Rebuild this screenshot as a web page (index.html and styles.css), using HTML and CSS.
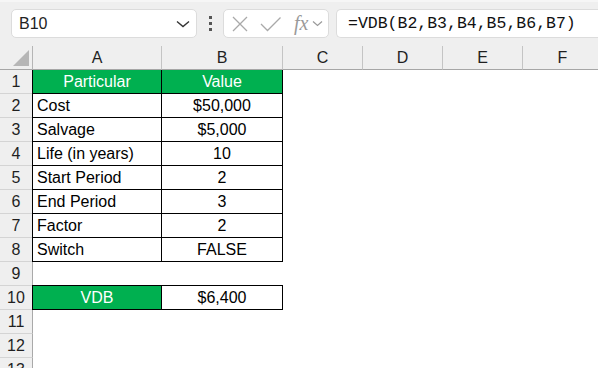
FILE: index.html
```html
<!DOCTYPE html>
<html>
<head>
<meta charset="utf-8">
<link rel="stylesheet" href="styles.css">
</head>
<body>
<div class="toolbar">
  <div class="namebox">
    <span class="name">B10</span>
    <svg class="chev" width="14" height="8" viewBox="0 0 14 8"><path d="M1 1.5 L7 6.5 L13 1.5" fill="none" stroke="#333" stroke-width="1.4"/></svg>
  </div>
  <div class="dots"><i></i><i></i><i></i></div>
  <div class="fxbox">
    <svg width="18" height="16" viewBox="0 0 18 16"><path d="M2 1 L16 15 M16 1 L2 15" stroke="#a9a9a9" stroke-width="1.3" fill="none"/></svg>
    <svg width="22" height="16" viewBox="0 0 22 16"><path d="M1 8 L7.5 14.5 L20.5 1.5" stroke="#a9a9a9" stroke-width="1.3" fill="none"/></svg>
    <span class="fx">fx</span>
    <svg width="11" height="7" viewBox="0 0 11 7"><path d="M1 1.5 L5.5 5.5 L10 1.5" fill="none" stroke="#9a9a9a" stroke-width="1.2"/></svg>
  </div>
  <div class="formula">=VDB(B2,B3,B4,B5,B6,B7)</div>
</div>
<div class="sheet">
  <div class="corner"><span class="tri"></span></div>
  <div class="ch">A</div><div class="ch">B</div><div class="ch">C</div><div class="ch">D</div><div class="ch">E</div><div class="ch">F</div>

  <div class="rh">1</div><div class="c t a head">Particular</div><div class="c t b head">Value</div><div class="c"></div><div class="c"></div><div class="c"></div><div class="c"></div>
  <div class="rh">2</div><div class="c t a">Cost</div><div class="c t b">$50,000</div><div class="c"></div><div class="c"></div><div class="c"></div><div class="c"></div>
  <div class="rh">3</div><div class="c t a">Salvage</div><div class="c t b">$5,000</div><div class="c"></div><div class="c"></div><div class="c"></div><div class="c"></div>
  <div class="rh">4</div><div class="c t a">Life (in years)</div><div class="c t b">10</div><div class="c"></div><div class="c"></div><div class="c"></div><div class="c"></div>
  <div class="rh">5</div><div class="c t a">Start Period</div><div class="c t b">2</div><div class="c"></div><div class="c"></div><div class="c"></div><div class="c"></div>
  <div class="rh">6</div><div class="c t a">End Period</div><div class="c t b">3</div><div class="c"></div><div class="c"></div><div class="c"></div><div class="c"></div>
  <div class="rh">7</div><div class="c t a">Factor</div><div class="c t b">2</div><div class="c"></div><div class="c"></div><div class="c"></div><div class="c"></div>
  <div class="rh">8</div><div class="c t a">Switch</div><div class="c t b">FALSE</div><div class="c"></div><div class="c"></div><div class="c"></div><div class="c"></div>
  <div class="rh">9</div><div class="c"></div><div class="c"></div><div class="c"></div><div class="c"></div><div class="c"></div><div class="c"></div>
  <div class="rh">10</div><div class="c t a head center topb">VDB</div><div class="c t b topb">$6,400</div><div class="c"></div><div class="c"></div><div class="c"></div><div class="c"></div>
  <div class="rh">11</div><div class="c"></div><div class="c"></div><div class="c"></div><div class="c"></div><div class="c"></div><div class="c"></div>
  <div class="rh">12</div><div class="c"></div><div class="c"></div><div class="c"></div><div class="c"></div><div class="c"></div><div class="c"></div>
  <div class="rh">13</div><div class="c"></div><div class="c"></div><div class="c"></div><div class="c"></div><div class="c"></div><div class="c"></div>
</div>
</body>
</html>
```

FILE: styles.css
```css
* { box-sizing: border-box; }
html, body { margin: 0; padding: 0; }
body {
  width: 598px;
  height: 368px;
  overflow: hidden;
  background: #fff;
  font-family: "Liberation Sans", Arial, sans-serif;
  color: #000;
}
.toolbar {
  height: 46px;
  background: #efefef;
  display: flex;
  align-items: flex-start;
  padding: 7px 0 0 11px;
  border-top: 2px solid #f6f6f6;
}
.namebox {
  width: 186px;
  height: 29px;
  background: #fff;
  border: 1px solid #dcdcdc;
  border-radius: 5px;
  display: flex;
  align-items: center;
  justify-content: space-between;
  padding: 0 6px 0 7px;
  font-size: 16px;
  color: #222;
}
.chev { margin-top: 1px; }
.dots {
  width: 26px;
  height: 29px;
  display: flex;
  flex-direction: column;
  align-items: center;
  justify-content: center;
  gap: 3px;
}
.dots i {
  display: block;
  width: 3px;
  height: 3px;
  background: #555;
}
.fxbox {
  width: 106px;
  height: 29px;
  background: #fff;
  border: 1px solid #dcdcdc;
  border-radius: 5px;
  display: flex;
  align-items: center;
  padding: 0 0 0 7px;
  gap: 4px;
}
.fxbox svg:nth-child(2) { margin-left: 7px; }
.fx {
  font-family: "Liberation Serif", "DejaVu Serif", serif;
  font-style: italic;
  font-size: 20px;
  color: #9a9a9a;
  margin-left: 8px;
  line-height: 1;
  margin-top: -2px;
}
.formula {
  margin-left: 7px;
  flex: 1;
  height: 29px;
  background: #fff;
  border: 1px solid #dcdcdc;
  border-right: none;
  border-radius: 5px 0 0 5px;
  font-family: "Liberation Mono", "DejaVu Sans Mono", monospace;
  font-size: 16.5px;
  color: #111;
  display: flex;
  align-items: center;
  padding-left: 11px;
  white-space: nowrap;
}
.sheet {
  display: grid;
  grid-template-columns: 33px 129px 121px 80px 80px 80px 80px;
  grid-template-rows: 24px repeat(13, 24px);
  font-size: 16px;
}
.corner {
  background: #efefef;
  border-right: 1px solid #b5b5b5;
  border-bottom: 1px solid #a6a6a6;
  position: relative;
}
.tri {
  position: absolute;
  right: 3px;
  bottom: 3px;
  width: 16px;
  height: 16px;
  background: #b6b6b6;
  clip-path: polygon(100% 0, 100% 100%, 0 100%);
}
.ch {
  background: #efefef;
  border-right: 1px solid #c4c4c4;
  border-bottom: 1px solid #a6a6a6;
  display: flex;
  align-items: center;
  justify-content: center;
  color: #1f1f1f;
  padding-top: 1px;
}
.rh {
  background: #efefef;
  border-right: 1px solid #a9a9a9;
  border-bottom: 1px solid #d4d4d4;
  display: flex;
  align-items: center;
  justify-content: center;
  color: #1f1f1f;
  padding-top: 1px;
}
.c {
  display: flex;
  align-items: center;
  padding-top: 1px;
  white-space: nowrap;
}
.t {
  border-right: 1px solid #000;
  border-bottom: 1px solid #000;
}
.t.a {
  padding-left: 4px;
  box-shadow: -1px 0 0 #000;
}
.t.b { justify-content: center; }
.topb { box-shadow: 0 -1px 0 #000; }
.t.a.topb { box-shadow: -1px 0 0 #000, 0 -1px 0 #000, -1px -1px 0 #000; }
.head {
  background: #00b050;
  color: #fff;
}
.head.a { justify-content: center; padding-left: 0; }
```
